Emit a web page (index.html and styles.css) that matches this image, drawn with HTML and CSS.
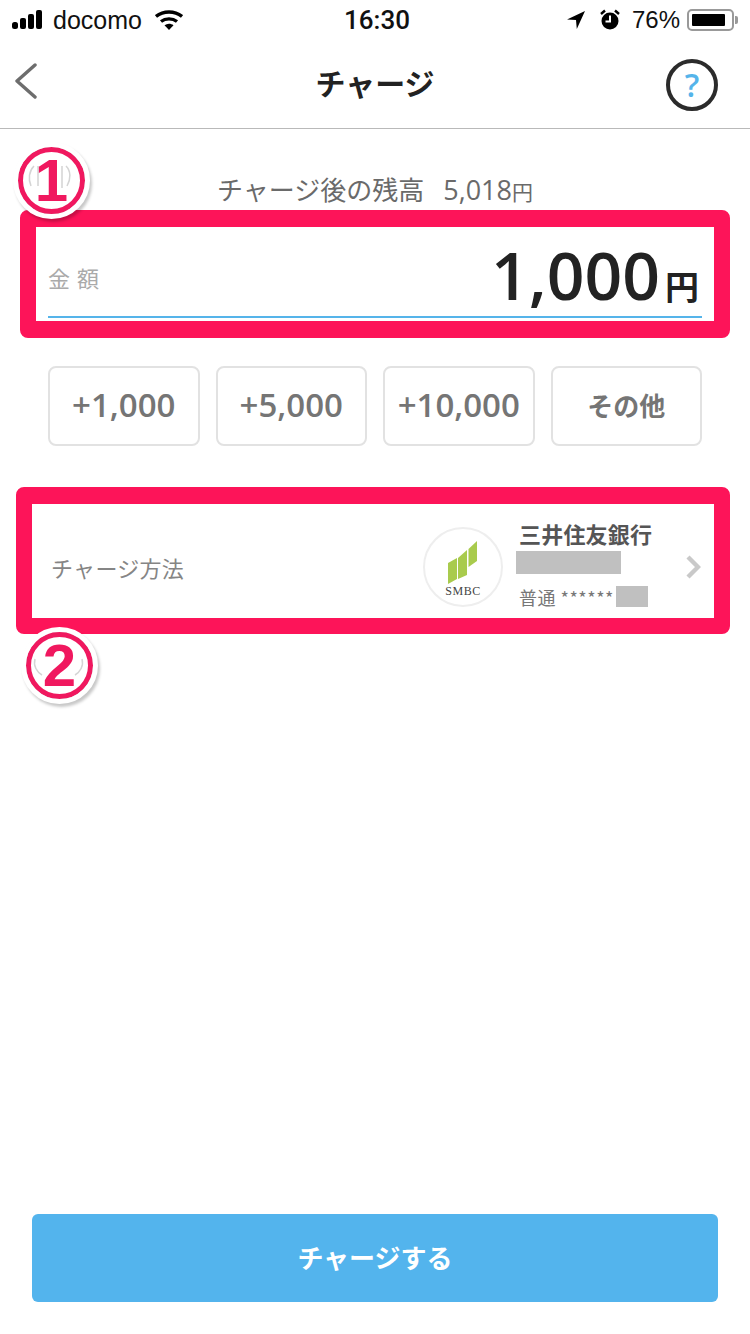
FILE: index.html
```html
<!DOCTYPE html>
<html lang="ja">
<head>
    <meta charset="UTF-8">
    <meta name="viewport" content="width=device-width, initial-scale=1.0">
    <title>チャージ</title>
    <link rel="stylesheet" href="styles.css">
</head>
<body>
    <!-- Status bar -->
    <div class="status">
        <div class="status-left">
            <svg class="signal" width="36" height="20" viewBox="0 0 36 20">
                <rect x="0" y="12" width="6" height="7" rx="2.5" fill="#000"/>
                <rect x="8" y="8" width="6" height="11" rx="2" fill="#000"/>
                <rect x="16" y="4" width="6" height="15" rx="2" fill="#000"/>
                <rect x="24" y="0" width="6" height="19" rx="2" fill="#000"/>
            </svg>
            <span>docomo</span>
            <svg class="wifi" width="28" height="20" viewBox="0 0 28 20">
                <path d="M1 6.5C8.5 .5 19.5 .5 27 6.5" fill="none" stroke="#000" stroke-width="3.4"/>
                <path d="M6 11.5C10.5 8 17.5 8 22 11.5" fill="none" stroke="#000" stroke-width="3.4"/>
                <path d="M9.5 15.2C12.3 13.2 15.7 13.2 18.5 15.2L14 20z" fill="#000"/>
            </svg>
        </div>
        <div class="status-time">16:30</div>
        <div class="status-right">
            <svg width="20" height="20" viewBox="0 0 20 20">
                <path d="M19 1L1 9.5l9 .6.8 9z" fill="#000"/>
            </svg>
            <svg class="alarm" width="20" height="22" viewBox="0 0 20 22">
                <circle cx="10" cy="12" r="8.5" fill="#000"/>
                <path d="M10 6.5V12.5H5.5" fill="none" stroke="#fff" stroke-width="2"/>
                <path d="M1 5L5 1.5M19 5L15 1.5" stroke="#000" stroke-width="2.4"/>
            </svg>
            <span class="battery-pct">76%</span>
            <div class="battery"><div class="battery-fill"></div></div>
            <div class="battery-tip"></div>
        </div>
    </div>

    <!-- Nav -->
    <nav class="nav">
        <svg class="nav-back" width="22" height="38" viewBox="0 0 22 38">
            <path d="M20 3L2 19l18 16" fill="none" stroke="#6d6d6d" stroke-width="3.4" stroke-linecap="round" stroke-linejoin="round"/>
        </svg>
        <h1 class="nav-title">チャージ</h1>
        <div class="help">?</div>
    </nav>

    <p class="balance">チャージ後の残高<span class="balance-num">5,018</span><small>円</small></p>

    <section class="amount-box">
        <div class="amount-row">
            <span class="amount-label">金 額</span>
            <span class="amount-value">1,000<small>円</small></span>
        </div>
    </section>

    <div class="quick">
        <button type="button">+1,000</button>
        <button type="button">+5,000</button>
        <button type="button">+10,000</button>
        <button type="button">その他</button>
    </div>

    <section class="method-box">
        <span class="method-label">チャージ方法</span>
        <div class="bank-logo">
            <svg width="40" height="44" viewBox="0 0 40 44">
                <polygon points="5,22 14,17 14,38 5,43" fill="#a9cb4d"/>
                <polygon points="15,17 24,9 24,34 15,38" fill="#a9cb4d"/>
                <polygon points="25.5,8 34,0 34,20 25.5,26" fill="#a9cb4d"/>
            </svg>
            <span class="bank-logo-text">SMBC</span>
        </div>
        <div class="bank-info">
            <div class="bank-name">三井住友銀行</div>
            <div class="mask mask-branch"></div>
            <div class="bank-account">普通 ******<span class="mask mask-number"></span></div>
        </div>
        <svg class="chevron" width="16" height="26" viewBox="0 0 16 26">
            <path d="M3 3l10 10L3 23" fill="none" stroke="#c9c9c9" stroke-width="4.4"/>
        </svg>
    </section>

    <button type="button" class="charge">チャージする</button>

    <!-- Annotation badges -->
    <div class="badge badge-one">
        <svg class="badge-arcs" width="56" height="56" viewBox="0 0 56 56">
            <path d="M8 34C5 27 6 19 11 14M15 14V34M44 34C48 27 48 19 43 14M39 14V36" fill="none" stroke="#d4d4d4" stroke-width="1.5"/>
        </svg>
        <span>1</span>
    </div>
    <div class="badge badge-two">
        <svg class="badge-arcs" width="56" height="56" viewBox="0 0 56 56">
            <path d="M4 22C2 29 6 35 11 38M51 22C53 29 49 35 44 38" fill="none" stroke="#d4d4d4" stroke-width="1.5"/>
        </svg>
        <span>2</span>
    </div>
</body>
</html>
```

FILE: styles.css
```css
* {
    box-sizing: border-box;
}
body {
    display: flex;
    flex-direction: column;
    position: relative;
    width: 750px;
    height: 1334px;
    margin: 0;
    overflow: hidden;
    font-family: "Noto Sans CJK JP", sans-serif;
    background-color: #fff;
    color: #222;
}

/* status bar */
.status {
    display: grid;
    grid-template-columns: 1fr auto 1fr;
    align-items: center;
    height: 40px;
    padding: 0 12px;
    font-family: "Liberation Sans", sans-serif;
    font-size: 24px;
    color: #111;
}
.status-left {
    display: flex;
    align-items: center;
    font-size: 25px;
}
.signal {
    margin-right: 5px;
}
.wifi {
    margin-left: 13px;
}
.status-time {
    margin-left: 4px;
    font-family: "Roboto", sans-serif;
    font-size: 26px;
    font-weight: 500;
}
.status-right {
    display: flex;
    align-items: center;
    justify-content: flex-end;
}
.alarm {
    margin-left: 14px;
}
.battery-pct {
    margin-left: 12px;
}
.battery {
    width: 47px;
    height: 22px;
    margin-left: 7px;
    padding: 3px;
    border: 2px solid #999;
    border-radius: 5px;
}
.battery-fill {
    width: 33px;
    height: 100%;
    border-radius: 1px;
    background-color: #000;
}
.battery-tip {
    width: 3px;
    height: 8px;
    margin-left: 1px;
    border-radius: 0 2px 2px 0;
    background-color: #999;
}

/* nav */
.nav {
    display: grid;
    grid-template-columns: 1fr auto 1fr;
    align-items: center;
    height: 89px;
    padding: 0 15px;
    border-bottom: 1px solid #b9b9b9;
}
.nav-back {
    margin-top: -6px;
}
.nav-title {
    margin: -4px 0 0 0;
    font-size: 30px;
    font-weight: 700;
    line-height: 40px;
    color: #222;
}
.help {
    justify-self: end;
    width: 52px;
    height: 52px;
    margin-top: 2px;
    margin-right: 17px;
    border: 4px solid #2b2b2b;
    border-radius: 50%;
    font-family: "Open Sans", sans-serif;
    font-size: 32px;
    font-weight: 600;
    line-height: 43px;
    text-align: center;
    color: #55b4ea;
}

/* balance */
.balance {
    display: flex;
    align-items: baseline;
    justify-content: center;
    height: 81px;
    margin: 0;
    padding: 41px 0 0 0;
    font-size: 26px;
    line-height: 38px;
    color: #6a6a6a;
}
.balance-num {
    margin-left: 19px;
    font-family: "Open Sans", sans-serif;
    font-size: 27px;
}
.balance small {
    font-size: 21px;
}

/* highlighted amount */
.amount-box {
    display: flex;
    align-items: flex-end;
    height: 128px;
    margin: 0 20px;
    padding: 0 12px 3px;
    border: 16px solid #fd1459;
    border-top-width: 17px;
    border-bottom-width: 17px;
    border-radius: 8px;
}
.amount-row {
    display: flex;
    align-items: center;
    justify-content: space-between;
    width: 100%;
    height: 88px;
    padding-right: 3px;
    border-bottom: 2px solid #55b4ea;
}
.amount-label {
    margin-top: 8px;
    font-size: 22px;
    letter-spacing: 1px;
    color: #aaa;
}
.amount-value {
    margin-top: 14px;
    font-family: "Open Sans", sans-serif;
    font-size: 66px;
    font-weight: 600;
    line-height: 72px;
    color: #222;
}
.amount-value small {
    margin-left: 5px;
    font-family: "Noto Sans CJK JP", sans-serif;
    font-size: 34px;
    font-weight: 700;
}

/* quick add buttons */
.quick {
    display: grid;
    grid-template-columns: repeat(4, 1fr);
    gap: 16px;
    margin-top: 28px;
    padding: 0 48px;
}
.quick button {
    height: 80px;
    padding: 0 0 4px;
    border: 2px solid #e2e2e2;
    border-radius: 8px;
    background-color: #fff;
    font-family: "Open Sans", "Noto Sans CJK JP", sans-serif;
    font-size: 33px;
    font-weight: 600;
    color: #757575;
}
.quick button:last-child {
    font-family: "Noto Sans CJK JP", sans-serif;
    font-size: 26px;
    font-weight: 700;
}

/* highlighted charge method */
.method-box {
    display: flex;
    align-items: center;
    height: 147px;
    margin: 41px 20px 0 16px;
    padding: 12px 13px 0 19px;
    border: 16px solid #fd1459;
    border-top-width: 17px;
    border-radius: 8px;
}
.method-label {
    flex: 1;
    font-size: 22px;
    letter-spacing: .3px;
    color: #858585;
}
.bank-logo {
    display: flex;
    flex-direction: column;
    align-items: center;
    width: 80px;
    height: 80px;
    margin-right: 2px;
    padding-top: 12px;
    border: 2px solid #eee;
    border-radius: 50%;
}
.bank-logo-text {
    margin-top: -1px;
    font-family: "Liberation Serif", serif;
    font-size: 12px;
    line-height: 14px;
    letter-spacing: .5px;
    color: #444;
}
.bank-info {
    width: 167px;
    margin-top: -9px;
    margin-left: 14px;
}
.bank-name {
    font-size: 22px;
    font-weight: 700;
    line-height: 30px;
    letter-spacing: .2px;
    color: #555;
}
.mask {
    background-color: #c0c0c0;
}
.mask-branch {
    width: 105px;
    height: 23px;
    margin-top: 3px;
    margin-left: -3px;
}
.bank-account {
    display: flex;
    align-items: center;
    height: 22px;
    margin-top: 12px;
    font-size: 18px;
    letter-spacing: .5px;
    color: #777;
}
.mask-number {
    width: 32px;
    height: 21px;
    margin-left: 2px;
}
.chevron {
    margin-left: -1px;
}

/* bottom button */
.charge {
    height: 88px;
    padding: 0 0 4px;
    margin: auto 32px 32px;
    border: none;
    border-radius: 6px;
    background-color: #53b4ed;
    font-family: "Noto Sans CJK JP", sans-serif;
    font-size: 26px;
    font-weight: 700;
    color: #fff;
}

/* annotation badges, sit over the boxes */
.badge {
    position: absolute;
    display: flex;
    align-items: center;
    justify-content: center;
    width: 67px;
    height: 67px;
    border: 5px solid #f0185f;
    outline: 5px solid #fff;
    border-radius: 50%;
    background-color: #fff;
    box-shadow: 2px 3px 3px 5px rgba(0, 0, 0, 0.22);
    font-family: "Liberation Sans", sans-serif;
    font-size: 60px;
    font-weight: 700;
    line-height: 1;
    color: #f0185f;
}
.badge span {
    position: relative;
}
.badge-arcs {
    position: absolute;
    top: 0;
    left: 0;
}
.badge-one {
    top: 147px;
    left: 18px;
}
.badge-two {
    top: 632px;
    left: 26px;
}
```
